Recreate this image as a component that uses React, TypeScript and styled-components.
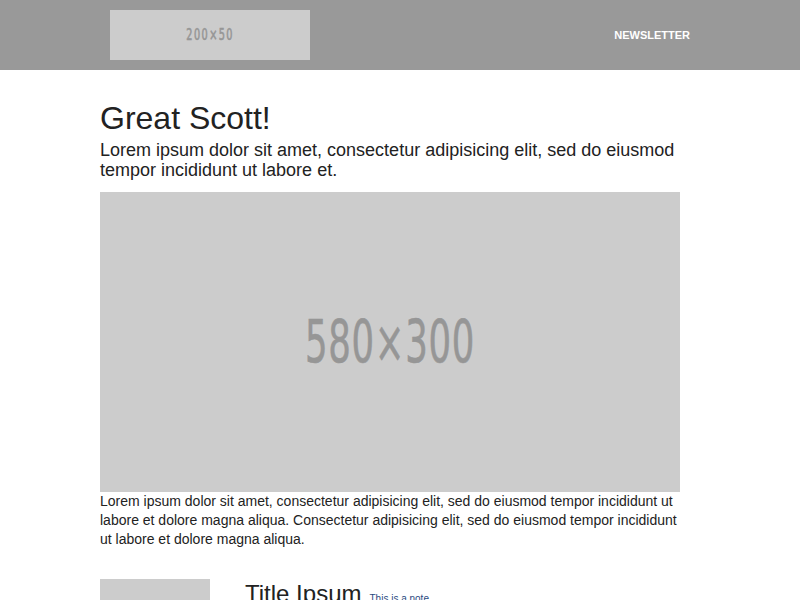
import React from "react";
import styled, { createGlobalStyle } from "styled-components";

const Global = createGlobalStyle`
  html, body { margin: 0; padding: 0; background: #ffffff; }
  body { font-family: "Liberation Sans", Arial, sans-serif; color: #222222; }
`;

const Header = styled.header`
  background: #999999;
  height: 70px;
`;

const HeaderInner = styled.div`
  width: 600px;
  margin: 0 0 0 100px;
  box-sizing: border-box;
  padding: 10px;
  display: flex;
  align-items: center;
  justify-content: space-between;
`;

const Placeholder = styled.div<{ $w: number; $h: number; $fs: number }>`
  width: ${(p) => p.$w}px;
  height: ${(p) => p.$h}px;
  background: #cccccc;
  color: #969696;
  display: flex;
  align-items: center;
  justify-content: center;
  font-family: "DejaVu Sans Condensed", "Liberation Sans Narrow", sans-serif;
  font-weight: normal;
  font-size: ${(p) => p.$fs}px;
  flex-shrink: 0;
`;

const PlaceText = styled.span<{ $sx: number; $ls: number }>`
  display: inline-block;
  transform: scaleX(${(p) => p.$sx});
  letter-spacing: ${(p) => p.$ls}px;
  -webkit-text-stroke: 0.6px #969696;
`;

const NavLink = styled.a`
  color: #ffffff;
  font-weight: bold;
  font-size: 11px;
  text-decoration: none;
`;

const Main = styled.main`
  width: 580px;
  margin-left: 100px;
`;

const Title = styled.h1`
  font-size: 32px;
  font-weight: normal;
  margin: 28px 0 0;
  line-height: 40px;
  color: #222222;
`;

const Lead = styled.p`
  font-size: 18px;
  line-height: 20px;
  margin: 2px 0 12px;
`;

const Body = styled.p`
  font-size: 14px;
  line-height: 19px;
  margin: 0 0 30px;
`;

const Row = styled.div`
  display: flex;
  align-items: flex-start;
`;

const Thumb = styled.div`
  width: 110px;
  height: 110px;
  background: #cccccc;
  margin-right: 35px;
  flex-shrink: 0;
`;

const ItemTitle = styled.h2`
  font-size: 24px;
  font-weight: normal;
  margin: 1px 0 0;
  line-height: 28px;
  color: #222222;
`;

const Note = styled.small`
  font-size: 10px;
  color: #2a4a7f;
  margin-left: 8px;
`;

export default function App() {
  return (
    <>
      <Global />
      <Header>
        <HeaderInner>
          <Placeholder $w={200} $h={50} $fs={15}>
            <PlaceText $sx={0.72} $ls={2}>200×50</PlaceText>
          </Placeholder>
          <NavLink href="#">NEWSLETTER</NavLink>
        </HeaderInner>
      </Header>
      <Main>
        <Title>Great Scott!</Title>
        <Lead>
          Lorem ipsum dolor sit amet, consectetur adipisicing elit, sed do eiusmod tempor incididunt ut labore et.
        </Lead>
        <Placeholder $w={580} $h={300} $fs={58}>
          <PlaceText $sx={0.68} $ls={1}>580×300</PlaceText>
        </Placeholder>
        <Body>
          Lorem ipsum dolor sit amet, consectetur adipisicing elit, sed do eiusmod tempor incididunt ut labore et
          dolore magna aliqua. Consectetur adipisicing elit, sed do eiusmod tempor incididunt ut labore et dolore magna
          aliqua.
        </Body>
        <Row>
          <Thumb />
          <div>
            <ItemTitle>
              Title Ipsum<Note>This is a note.</Note>
            </ItemTitle>
          </div>
        </Row>
      </Main>
    </>
  );
}
